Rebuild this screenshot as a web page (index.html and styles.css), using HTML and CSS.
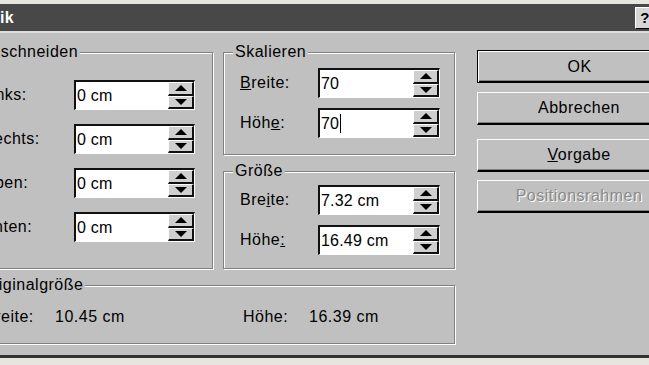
FILE: index.html
```html
<!DOCTYPE html>
<html>
<head>
    <title>Grafik</title>
    <link rel="stylesheet" href="styles.css">
</head>
<body>
    <div class="window">
        <div class="titlebar">
            <span class="title">Grafik</span>
            <span class="help">?</span>
        </div>

        <div class="dialog">
            <div class="top">
                <fieldset class="group crop">
                    <legend>Zuschneiden</legend>
                    <div class="rows">
                        <label>Links:</label>
                        <div class="spin"><span class="val">0 cm</span><span class="arrows"><span class="up"></span><span class="down"></span></span></div>
                        <label>Rechts:</label>
                        <div class="spin"><span class="val">0 cm</span><span class="arrows"><span class="up"></span><span class="down"></span></span></div>
                        <label>Oben:</label>
                        <div class="spin"><span class="val">0 cm</span><span class="arrows"><span class="up"></span><span class="down"></span></span></div>
                        <label>Unten:</label>
                        <div class="spin"><span class="val">0 cm</span><span class="arrows"><span class="up"></span><span class="down"></span></span></div>
                    </div>
                </fieldset>

                <div class="middle">
                    <fieldset class="group scale">
                        <legend>Skalieren</legend>
                        <div class="rows small">
                            <label><u>B</u>reite:</label>
                            <div class="spin"><span class="val">70</span><span class="arrows"><span class="up"></span><span class="down"></span></span></div>
                            <label>Höh<u>e</u>:</label>
                            <div class="spin"><span class="val">70<span class="caret"></span></span><span class="arrows"><span class="up"></span><span class="down"></span></span></div>
                        </div>
                    </fieldset>

                    <fieldset class="group size">
                        <legend>Größe</legend>
                        <div class="rows small">
                            <label>Bre<u>i</u>te:</label>
                            <div class="spin"><span class="val">7.32 cm</span><span class="arrows"><span class="up"></span><span class="down"></span></span></div>
                            <label>Höhe<u>:</u></label>
                            <div class="spin"><span class="val">16.49 cm</span><span class="arrows"><span class="up"></span><span class="down"></span></span></div>
                        </div>
                    </fieldset>
                </div>

                <div class="buttons">
                    <button class="btn default">OK</button>
                    <button class="btn cancel">Abbrechen</button>
                    <button class="btn preset"><u>V</u>orgabe</button>
                    <button class="btn frame" disabled>Positionsrahmen</button>
                </div>
            </div>

            <fieldset class="group original">
                <legend>Originalgröße</legend>
                <div class="orig-row">
                    <span>Breite:</span>
                    <span>10.45 cm</span>
                    <span>Höhe:</span>
                    <span>16.39 cm</span>
                </div>
            </fieldset>
        </div>
    </div>
</body>
</html>
```

FILE: styles.css
```css
body {
    margin: 0;
    overflow: hidden;
    background-color: #e6e6de;
    font-family: "Liberation Sans", Arial, sans-serif;
    font-size: 16px;
    letter-spacing: 0.5px;
    color: #000;
}

.window {
    margin-left: -45px;
    margin-top: 4px;
    width: 760px;
    border-bottom: 3px solid #333;
}

.titlebar {
    height: 27px;
    background-color: #484848;
    display: flex;
    align-items: center;
    padding-left: 10px;
}

.title {
    flex: 1;
    color: #fff;
    font-weight: bold;
}

.help {
    width: 20px;
    height: 22px;
    box-sizing: border-box;
    margin-right: 60px;
    background-color: #d6d6d6;
    border-top: 1px solid #fff;
    border-left: 1px solid #fff;
    border-right: 1px solid #000;
    border-bottom: 1px solid #000;
    font-weight: bold;
    font-size: 15px;
    line-height: 20px;
    text-align: center;
}

.dialog {
    box-sizing: border-box;
    height: 324px;
    background-color: #c0c0c0;
    border-top: 2px solid #dcdcdc;
    padding: 10px 0 0 12px;
}

.top {
    display: flex;
    align-items: stretch;
}

.group {
    margin: 0;
    min-width: 0;
    border: 1px solid #808080;
    box-shadow: inset 1px 1px 0 #fff, 1px 1px 0 #fff;
}

.group legend {
    padding: 0 2px;
    margin-left: -7px;
    line-height: 18px;
    background-color: #c0c0c0;
}

.crop {
    width: 246px;
    box-sizing: border-box;
    padding: 19px 17px 26px 14px;
}

.crop legend {
    margin-left: -3px;
}

.rows {
    display: grid;
    grid-template-columns: 92px 121px;
    row-gap: 14px;
    align-items: center;
}

.rows.small {
    grid-template-columns: 78px 122px;
    row-gap: 10px;
}

.middle {
    width: 232px;
    margin-left: 10px;
    display: flex;
    flex-direction: column;
}

.scale {
    padding: 7px 14px 16px 16px;
}

.size {
    flex: 1;
    margin-top: 7px;
    padding: 5px 14px 12px 16px;
}

.spin {
    display: flex;
    height: 30px;
    box-sizing: border-box;
    background-color: #fff;
    border-top: 2px solid #111;
    border-left: 2px solid #111;
    border-right: 1px solid #fff;
    border-bottom: 1px solid #fff;
}

.spin .val {
    flex: 1;
    padding-left: 1px;
    line-height: 27px;
    letter-spacing: 0.2px;
}

.caret {
    display: inline-block;
    width: 1px;
    height: 19px;
    margin-left: 1px;
    background-color: #000;
    vertical-align: -4px;
}

.arrows {
    width: 26px;
    display: flex;
    flex-direction: column;
}

.arrows span {
    flex: 1;
    display: flex;
    align-items: center;
    justify-content: center;
    background-color: #cfcfcf;
    border-top: 1px solid #fff;
    border-left: 1px solid #fff;
    border-right: 2px solid #111;
    border-bottom: 2px solid #111;
}

.arrows .up::before,
.arrows .down::before {
    content: "";
    width: 0;
    height: 0;
    border-left: 6px solid transparent;
    border-right: 6px solid transparent;
}

.arrows .up::before {
    border-bottom: 6px solid #000;
}

.arrows .down::before {
    border-top: 6px solid #000;
}

.buttons {
    width: 205px;
    margin-left: 22px;
    padding-top: 7px;
    display: flex;
    flex-direction: column;
}

.btn {
    height: 33px;
    box-sizing: border-box;
    padding: 0;
    font: inherit;
    letter-spacing: 0.5px;
    color: #000;
    background-color: #c0c0c0;
    border-top: 1px solid #fff;
    border-left: 1px solid #fff;
    border-right: 2px solid #000;
    border-bottom: 2px solid #000;
    box-shadow: inset -1px -1px 0 #808080;
}

.btn.default {
    border: 1px solid #000;
    box-shadow: inset 1px 1px 0 #fff, inset -1px -1px 0 #000, inset -2px -2px 0 #808080;
}

.cancel {
    margin-top: 9px;
}

.preset {
    margin-top: 14px;
}

.frame {
    margin-top: 8px;
    color: #8a8a8a;
    text-shadow: 1px 1px 0 #fff;
}

.original {
    width: 488px;
    box-sizing: border-box;
    margin-top: 7px;
    padding: 14px 16px 17px 16px;
}

.original legend {
    margin-left: -6px;
}

.orig-row {
    display: grid;
    grid-template-columns: 71px 188px 66px auto;
    line-height: 18px;
}
```
